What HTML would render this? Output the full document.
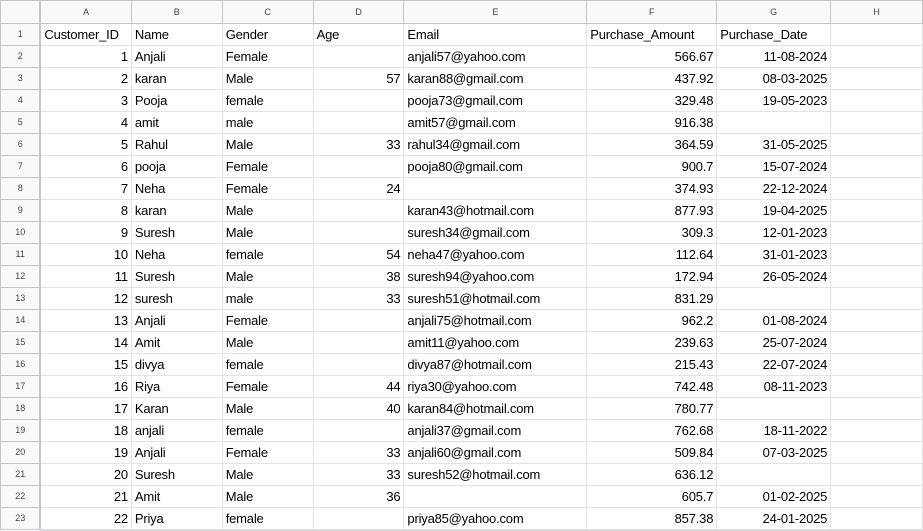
<!DOCTYPE html>
<html><head><style>
body{margin:0;background:#fff;width:923px;height:531px;overflow:hidden;font-family:"Liberation Sans",Arial,sans-serif}
table{border-collapse:collapse;table-layout:fixed;position:absolute;left:0;top:0}
td{border:1px solid #e2e3e3;height:21px;padding:0 3px;font-size:13px;color:#000;white-space:nowrap;overflow:hidden;line-height:21px;letter-spacing:-0.2px}
tr.h td{height:22px;line-height:22px;background:#f8f9fa;color:#444;font-size:9px;text-align:center;border-color:#c4c7c5;letter-spacing:0}
td.rh{background:#f8f9fa;color:#444;font-size:9px;text-align:center;border-color:#c4c7c5;padding:0;border-right:2px solid #c4c7c5;letter-spacing:0}
.r{text-align:right}
</style></head><body>
<table>
<colgroup><col style="width:40px"><col style="width:91px"><col style="width:91px"><col style="width:91px"><col style="width:91px"><col style="width:183px"><col style="width:130px"><col style="width:114px"><col style="width:92px"></colgroup>
<tr class="h"><td class="rh"></td><td>A</td><td>B</td><td>C</td><td>D</td><td>E</td><td>F</td><td>G</td><td>H</td></tr>
<tr><td class="rh">1</td><td>Customer_ID</td><td>Name</td><td>Gender</td><td>Age</td><td>Email</td><td>Purchase_Amount</td><td>Purchase_Date</td><td></td></tr>
<tr><td class="rh">2</td><td class="r">1</td><td>Anjali</td><td>Female</td><td></td><td>anjali57@yahoo.com</td><td class="r">566.67</td><td class="r">11-08-2024</td><td></td></tr>
<tr><td class="rh">3</td><td class="r">2</td><td>karan</td><td>Male</td><td class="r">57</td><td>karan88@gmail.com</td><td class="r">437.92</td><td class="r">08-03-2025</td><td></td></tr>
<tr><td class="rh">4</td><td class="r">3</td><td>Pooja</td><td>female</td><td></td><td>pooja73@gmail.com</td><td class="r">329.48</td><td class="r">19-05-2023</td><td></td></tr>
<tr><td class="rh">5</td><td class="r">4</td><td>amit</td><td>male</td><td></td><td>amit57@gmail.com</td><td class="r">916.38</td><td></td><td></td></tr>
<tr><td class="rh">6</td><td class="r">5</td><td>Rahul</td><td>Male</td><td class="r">33</td><td>rahul34@gmail.com</td><td class="r">364.59</td><td class="r">31-05-2025</td><td></td></tr>
<tr><td class="rh">7</td><td class="r">6</td><td>pooja</td><td>Female</td><td></td><td>pooja80@gmail.com</td><td class="r">900.7</td><td class="r">15-07-2024</td><td></td></tr>
<tr><td class="rh">8</td><td class="r">7</td><td>Neha</td><td>Female</td><td class="r">24</td><td></td><td class="r">374.93</td><td class="r">22-12-2024</td><td></td></tr>
<tr><td class="rh">9</td><td class="r">8</td><td>karan</td><td>Male</td><td></td><td>karan43@hotmail.com</td><td class="r">877.93</td><td class="r">19-04-2025</td><td></td></tr>
<tr><td class="rh">10</td><td class="r">9</td><td>Suresh</td><td>Male</td><td></td><td>suresh34@gmail.com</td><td class="r">309.3</td><td class="r">12-01-2023</td><td></td></tr>
<tr><td class="rh">11</td><td class="r">10</td><td>Neha</td><td>female</td><td class="r">54</td><td>neha47@yahoo.com</td><td class="r">112.64</td><td class="r">31-01-2023</td><td></td></tr>
<tr><td class="rh">12</td><td class="r">11</td><td>Suresh</td><td>Male</td><td class="r">38</td><td>suresh94@yahoo.com</td><td class="r">172.94</td><td class="r">26-05-2024</td><td></td></tr>
<tr><td class="rh">13</td><td class="r">12</td><td>suresh</td><td>male</td><td class="r">33</td><td>suresh51@hotmail.com</td><td class="r">831.29</td><td></td><td></td></tr>
<tr><td class="rh">14</td><td class="r">13</td><td>Anjali</td><td>Female</td><td></td><td>anjali75@hotmail.com</td><td class="r">962.2</td><td class="r">01-08-2024</td><td></td></tr>
<tr><td class="rh">15</td><td class="r">14</td><td>Amit</td><td>Male</td><td></td><td>amit11@yahoo.com</td><td class="r">239.63</td><td class="r">25-07-2024</td><td></td></tr>
<tr><td class="rh">16</td><td class="r">15</td><td>divya</td><td>female</td><td></td><td>divya87@hotmail.com</td><td class="r">215.43</td><td class="r">22-07-2024</td><td></td></tr>
<tr><td class="rh">17</td><td class="r">16</td><td>Riya</td><td>Female</td><td class="r">44</td><td>riya30@yahoo.com</td><td class="r">742.48</td><td class="r">08-11-2023</td><td></td></tr>
<tr><td class="rh">18</td><td class="r">17</td><td>Karan</td><td>Male</td><td class="r">40</td><td>karan84@hotmail.com</td><td class="r">780.77</td><td></td><td></td></tr>
<tr><td class="rh">19</td><td class="r">18</td><td>anjali</td><td>female</td><td></td><td>anjali37@gmail.com</td><td class="r">762.68</td><td class="r">18-11-2022</td><td></td></tr>
<tr><td class="rh">20</td><td class="r">19</td><td>Anjali</td><td>Female</td><td class="r">33</td><td>anjali60@gmail.com</td><td class="r">509.84</td><td class="r">07-03-2025</td><td></td></tr>
<tr><td class="rh">21</td><td class="r">20</td><td>Suresh</td><td>Male</td><td class="r">33</td><td>suresh52@hotmail.com</td><td class="r">636.12</td><td></td><td></td></tr>
<tr><td class="rh">22</td><td class="r">21</td><td>Amit</td><td>Male</td><td class="r">36</td><td></td><td class="r">605.7</td><td class="r">01-02-2025</td><td></td></tr>
<tr><td class="rh">23</td><td class="r">22</td><td>Priya</td><td>female</td><td></td><td>priya85@yahoo.com</td><td class="r">857.38</td><td class="r">24-01-2025</td><td></td></tr>
</table>
<div style="position:absolute;left:40px;top:529px;width:883px;height:2px;background:#dadce0"></div>
</body></html>
